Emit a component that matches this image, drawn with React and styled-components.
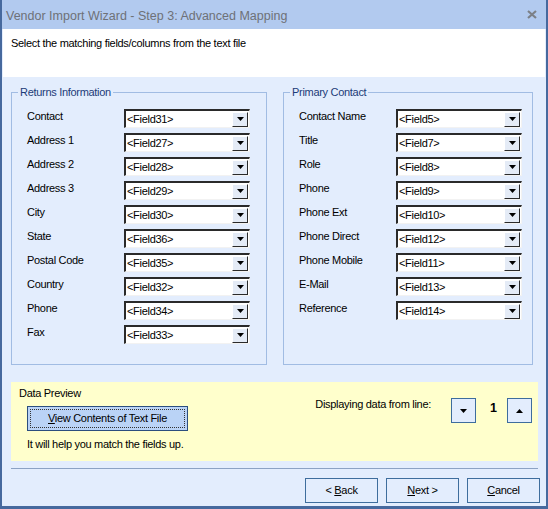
import React from "react";
import styled, { createGlobalStyle } from "styled-components";

const Global = createGlobalStyle`
  html, body { margin: 0; padding: 0; background: #e3edfd; }
  body { width: 548px; height: 509px; overflow: hidden; }
`;

const Window = styled.div`
  width: 548px;
  height: 509px;
  box-sizing: border-box;
  border: solid #46699e;
  border-width: 0 2px 3px 2px;
  background: #e3edfd;
  display: flex;
  flex-direction: column;
  font-family: "Liberation Sans", Arial, sans-serif;
  font-size: 11px;
  line-height: 13px;
  letter-spacing: -0.3px;
  color: #000;
`;

const TitleBar = styled.div`
  height: 29px;
  flex: none;
  box-sizing: border-box;
  background: #b2caef;
  display: flex;
  align-items: center;
  justify-content: space-between;
  padding: 3px 9px 0 4px;
`;

const Title = styled.span`
  font-size: 12.5px;
  letter-spacing: 0;
  color: #6e7177;
`;

const CloseIcon = styled.svg`
  display: block;
  margin-top: -3px;
`;

const Header = styled.div`
  height: 48px;
  flex: none;
  box-sizing: border-box;
  background: #fff;
  margin: 0 1px;
  padding: 8px 8px 0 8px;
`;

const Content = styled.div`
  flex: 1;
  display: flex;
  flex-direction: column;
  padding: 9px 6px 0 9px;
`;

const Groups = styled.div`
  display: flex;
  gap: 16px;
`;

const Group = styled.fieldset`
  margin: 0;
  width: ${(p) => p.$w}px;
  box-sizing: border-box;
  border: 1px solid #a1bce3;
  padding: 10px 10px 20px 15px;
  min-width: 0;
`;

const Legend = styled.legend`
  padding: 0 2px;
  margin-left: -9px;
  color: #1c3b78;
  line-height: 13px;
`;

const Rows = styled.div`
  display: flex;
  flex-direction: column;
  gap: 5px;
`;

const Row = styled.div`
  display: flex;
  align-items: flex-start;
  height: 19px;
`;

const Label = styled.span`
  width: 97px;
  flex: none;
  padding-top: 1px;
`;

const Combo = styled.div`
  width: 126px;
  height: 19px;
  box-sizing: border-box;
  background: #fff;
  border-top: 2px solid #2a2a2a;
  border-left: 2px solid #2a2a2a;
  border-right: 1px solid #f2f2f2;
  border-bottom: 1px solid #f2f2f2;
  display: flex;
  align-items: center;
  justify-content: space-between;
  padding-left: 1px;
`;

const DropBtn = styled.span`
  width: 16px;
  height: 15px;
  box-sizing: border-box;
  background: #e4ebf6;
  border-top: 1px solid #fff;
  border-left: 1px solid #fff;
  border-right: 1px solid #2a2a2a;
  border-bottom: 1px solid #2a2a2a;
  display: flex;
  align-items: center;
  justify-content: center;
  margin-right: 1px;
`;

const Preview = styled.div`
  margin-top: 17px;
  width: 527px;
  height: 79px;
  box-sizing: border-box;
  background: #ffffcc;
  display: flex;
  justify-content: space-between;
  padding: 5px 6px 0 8px;
`;

const PreviewLeft = styled.div`
  display: flex;
  flex-direction: column;
  align-items: flex-start;
`;

const ViewButton = styled.button`
  margin: 6px 0 0 8px;
  width: 161px;
  height: 25px;
  box-sizing: border-box;
  background: #bad3f6;
  border: 1px solid #2c4e7e;
  padding: 2px;
  font: inherit;
  letter-spacing: inherit;
  color: #000;
`;

const FocusRect = styled.span`
  display: flex;
  align-items: center;
  justify-content: center;
  height: 100%;
  border: 1px dotted #333;
  box-sizing: border-box;
`;

const Hint = styled.span`
  margin: 7px 0 0 8px;
`;

const PreviewRight = styled.div`
  display: flex;
  align-items: flex-start;
  padding-top: 11px;
`;

const LineLabel = styled.span`
  margin-right: 20px;
  margin-top: 0px;
`;

const SpinBtn = styled.button`
  width: 25px;
  height: 25px;
  box-sizing: border-box;
  background: #e3edfd;
  border: 1px solid #3e6d9d;
  padding: 0;
  display: flex;
  align-items: center;
  justify-content: center;
`;

const LineNum = styled.span`
  width: 31px;
  box-sizing: border-box;
  text-align: right;
  padding-right: 10px;
  padding-top: 4px;
  font-weight: bold;
  font-size: 12.5px;
  letter-spacing: 0;
`;

const Separator = styled.div`
  margin-top: 7px;
  width: 527px;
  height: 1px;
  background: #8ba2c4;
`;

const Footer = styled.div`
  display: flex;
  justify-content: flex-end;
  gap: 8px;
  margin-top: 9px;
  padding-right: 0px;
`;

const FooterBtn = styled.button`
  width: 73px;
  height: 25px;
  box-sizing: border-box;
  background: #e3edfd;
  border: 1px solid #3e6d9d;
  padding: 0;
  font: inherit;
  letter-spacing: inherit;
  color: #000;
`;

const Key = styled.u`
  text-decoration: underline;
`;

const Tri = ({ up }) => (
  <svg width="7" height="4" viewBox="0 0 7 4">
    <path d={up ? "M0 4 L7 4 L3.5 0 Z" : "M0 0 L7 0 L3.5 4 Z"} fill="#000" />
  </svg>
);

const left = [
  ["Contact", "<Field31>"],
  ["Address 1", "<Field27>"],
  ["Address 2", "<Field28>"],
  ["Address 3", "<Field29>"],
  ["City", "<Field30>"],
  ["State", "<Field36>"],
  ["Postal Code", "<Field35>"],
  ["Country", "<Field32>"],
  ["Phone", "<Field34>"],
  ["Fax", "<Field33>"],
];

const right = [
  ["Contact Name", "<Field5>"],
  ["Title", "<Field7>"],
  ["Role", "<Field8>"],
  ["Phone", "<Field9>"],
  ["Phone Ext", "<Field10>"],
  ["Phone Direct", "<Field12>"],
  ["Phone Mobile", "<Field11>"],
  ["E-Mail", "<Field13>"],
  ["Reference", "<Field14>"],
];

const FieldRows = ({ items }) => (
  <Rows>
    {items.map(([l, v]) => (
      <Row key={l}>
        <Label>{l}</Label>
        <Combo>
          <span>{v}</span>
          <DropBtn>
            <Tri />
          </DropBtn>
        </Combo>
      </Row>
    ))}
  </Rows>
);

export default function App() {
  return (
    <>
      <Global />
      <Window>
        <TitleBar>
          <Title>Vendor Import Wizard - Step 3: Advanced Mapping</Title>
          <CloseIcon width="10" height="9" viewBox="0 0 10 9">
            <path d="M1 1 L9 8 M9 1 L1 8" stroke="#7c8087" strokeWidth="2.2" />
          </CloseIcon>
        </TitleBar>
        <Header>Select the matching fields/columns from the text file</Header>
        <Content>
          <Groups>
            <Group $w={256}>
              <Legend>Returns Information</Legend>
              <FieldRows items={left} />
            </Group>
            <Group $w={250}>
              <Legend>Primary Contact</Legend>
              <FieldRows items={right} />
            </Group>
          </Groups>
          <Preview>
            <PreviewLeft>
              <span>Data Preview</span>
              <ViewButton>
                <FocusRect>
                  <span>
                    <Key>V</Key>iew Contents of Text File
                  </span>
                </FocusRect>
              </ViewButton>
              <Hint>It will help you match the fields up.</Hint>
            </PreviewLeft>
            <PreviewRight>
              <LineLabel>Displaying data from line:</LineLabel>
              <SpinBtn>
                <Tri />
              </SpinBtn>
              <LineNum>1</LineNum>
              <SpinBtn>
                <Tri up />
              </SpinBtn>
            </PreviewRight>
          </Preview>
          <Separator />
          <Footer>
            <FooterBtn>
              &lt; <Key>B</Key>ack
            </FooterBtn>
            <FooterBtn>
              <Key>N</Key>ext &gt;
            </FooterBtn>
            <FooterBtn>
              <Key>C</Key>ancel
            </FooterBtn>
          </Footer>
        </Content>
      </Window>
    </>
  );
}
